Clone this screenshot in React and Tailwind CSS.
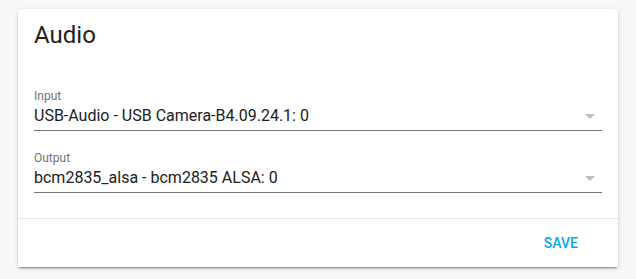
import React from "react";

function Field({ label, value }) {
  return (
    <div className="flex flex-col">
      <div className="text-[12px] leading-[16px] text-[#737373]">{label}</div>
      <div className="flex items-start justify-between pb-[2px] border-b border-[#757575]">
        <div className="text-[16px] leading-[24px] text-[#212121]">{value}</div>
        <svg width="24" height="24" viewBox="0 0 24 24" className="shrink-0">
          <path d="M7 10l5 5 5-5z" fill="#bdbdbd" />
        </svg>
      </div>
    </div>
  );
}

export default function App() {
  return (
    <div
      className="w-[636px] h-[279px] bg-[#f7f7f7] pt-[9px] pl-[18px]"
      style={{ fontFamily: "Roboto, 'Noto Sans', sans-serif" }}
    >
      <div className="w-[600px] h-[258px] bg-white rounded-[2px] shadow-[0_2px_2px_0_rgba(0,0,0,0.14),0_1px_5px_0_rgba(0,0,0,0.12),0_3px_1px_-2px_rgba(0,0,0,0.2)] flex flex-col">
        <div className="px-4 pt-[10px] text-[24px] leading-[32px] text-[#212121]">Audio</div>
        <div className="px-4 pt-[37px] flex flex-col gap-[19px]">
          <Field label="Input" value="USB-Audio - USB Camera-B4.09.24.1: 0" />
          <Field label="Output" value="bcm2835_alsa - bcm2835 ALSA: 0" />
        </div>
        <div className="mt-[25px] border-t border-[#e8e8e8] flex justify-end pr-[40px] pt-[14px]">
          <span className="text-[14px] leading-[20px] font-medium text-[#03a9f4]">SAVE</span>
        </div>
      </div>
    </div>
  );
}
